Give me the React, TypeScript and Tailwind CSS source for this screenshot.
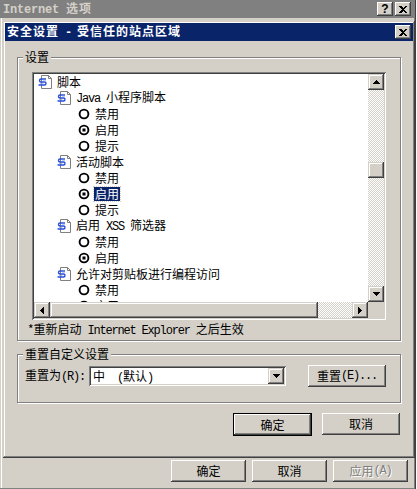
import React from 'react';

const cjk = "font-['Noto_Sans_CJK_SC','Noto_Sans',sans-serif]";

function M({ children, bold }: { children: React.ReactNode; bold?: boolean }) {
  return (
    <span
      className={
        bold
          ? "font-['Liberation_Mono',monospace] text-[12px] tracking-[-0.2px] whitespace-pre"
          : "font-['Liberation_Mono',monospace] text-[12px] tracking-[-1.2px] whitespace-pre"
      }
    >
      {children}
    </span>
  );
}

function Tri({ dir }: { dir: 'up' | 'down' | 'left' | 'right' }) {
  if (dir === 'up' || dir === 'down') {
    return (
      <svg width="7" height="4" viewBox="0 0 7 4" shapeRendering="crispEdges">
        <polygon points={dir === 'up' ? '3.5,0 7,4 0,4' : '0,0 7,0 3.5,4'} fill="#000" />
      </svg>
    );
  }
  return (
    <svg width="4" height="7" viewBox="0 0 4 7" shapeRendering="crispEdges">
      <polygon points={dir === 'left' ? '4,0 4,7 0,3.5' : '0,0 0,7 4,3.5'} fill="#000" />
    </svg>
  );
}

function ArrowBtn({ dir }: { dir: 'up' | 'down' | 'left' | 'right' }) {
  return (
    <div className="w-[16px] h-[16px] shrink-0 bg-[#d4d0c8] flex items-center justify-center shadow-[inset_-1px_-1px_0_#404040,inset_1px_1px_0_#d4d0c8,inset_-2px_-2px_0_#808080,inset_2px_2px_0_#ffffff]">
      <Tri dir={dir} />
    </div>
  );
}

function CloseGlyph() {
  return (
    <svg width="8" height="7" viewBox="0 0 8 7" shapeRendering="crispEdges">
      <path d="M0 0h2l2 2l2 -2h2l-3 3.5l3 3.5h-2l-2 -2l-2 2h-2l3 -3.5z" fill="#000" />
    </svg>
  );
}

function TitleBtn({ children }: { children: React.ReactNode }) {
  return (
    <div className="w-[16px] h-[14px] bg-[#d4d0c8] flex items-center justify-center shadow-[inset_-1px_-1px_0_#404040,inset_1px_1px_0_#ffffff,inset_-2px_-2px_0_#808080]">
      {children}
    </div>
  );
}

function ScriptIcon() {
  return (
    <svg width="16" height="16" viewBox="0 0 16 16" className="shrink-0">
      <path d="M4.5 1.5h7l3 3v10h-10z" fill="#fff" stroke="#808080" />
      <path d="M11.5 1.5v3h3" fill="none" stroke="#808080" />
      <path d="M9 5H4a1.5 1.5 0 0 0 0 3h3.5a1.5 1.5 0 0 1 0 3H1.5" fill="none" stroke="#2a4fd6" strokeWidth="1.4" />
      <path d="M6 6.3h3M3 9.5h3.5" stroke="#9db4f0" strokeWidth="0.8" />
    </svg>
  );
}

function Radio({ checked }: { checked?: boolean }) {
  return (
    <svg width="12" height="12" viewBox="0 0 12 12" className="shrink-0">
      <circle cx="6" cy="6" r="4.4" fill="#fff" stroke="#000" strokeWidth="1.9" />
      {checked && <rect x="4.5" y="4.5" width="3" height="3" fill="#000" />}
    </svg>
  );
}

type Row =
  | { kind: 'head'; level: 0 | 1; text: React.ReactNode }
  | { kind: 'radio'; text: string; checked?: boolean; selected?: boolean };

const rows: Row[] = [
  { kind: 'head', level: 0, text: '脚本' },
  { kind: 'head', level: 1, text: <><M>Java </M>小程序脚本</> },
  { kind: 'radio', text: '禁用' },
  { kind: 'radio', text: '启用', checked: true },
  { kind: 'radio', text: '提示' },
  { kind: 'head', level: 1, text: '活动脚本' },
  { kind: 'radio', text: '禁用' },
  { kind: 'radio', text: '启用', checked: true, selected: true },
  { kind: 'radio', text: '提示' },
  { kind: 'head', level: 1, text: <>启用<M> XSS </M>筛选器</> },
  { kind: 'radio', text: '禁用' },
  { kind: 'radio', text: '启用', checked: true },
  { kind: 'head', level: 1, text: '允许对剪贴板进行编程访问' },
  { kind: 'radio', text: '禁用' },
  { kind: 'radio', text: '启用', checked: true },
];

function TreeRow({ row }: { row: Row }) {
  if (row.kind === 'head') {
    return (
      <div className={`h-[16px] flex items-center gap-[4px] whitespace-nowrap ${row.level === 0 ? 'pl-[3px]' : 'pl-[22px]'}`}>
        <ScriptIcon />
        <span className="leading-[16px]">{row.text}</span>
      </div>
    );
  }
  return (
    <div className="h-[16px] flex items-center pl-[44px] whitespace-nowrap">
      <Radio checked={row.checked} />
      <span
        className={
          row.selected
            ? 'ml-[4px] px-[1px] leading-[14px] bg-[#0a246a] text-white outline outline-1 outline-dotted outline-[#d4d0c8]'
            : 'ml-[5px] leading-[16px]'
        }
      >
        {row.text}
      </span>
    </div>
  );
}

function Group({ label, className, children }: { label: string; className?: string; children: React.ReactNode }) {
  return (
    <div className={`relative mx-[12px] border border-[#808080] shadow-[inset_1px_1px_0_#ffffff,1px_1px_0_#ffffff] ${className ?? ''}`}>
      <span className="absolute -top-[8px] left-[5px] px-[2px] bg-[#d4d0c8] leading-[14px]">{label}</span>
      {children}
    </div>
  );
}

function Btn({ children, w, def, disabled }: { children: React.ReactNode; w: string; def?: boolean; disabled?: boolean }) {
  if (def) {
    return (
      <div className={`${w} h-[23px] border border-black`}>
        <div className="w-full h-full flex items-center justify-center shadow-[inset_-1px_-1px_0_#404040,inset_1px_1px_0_#ffffff,inset_-2px_-2px_0_#808080]">
          {children}
        </div>
      </div>
    );
  }
  return (
    <div
      className={`${w} h-[22px] flex items-center justify-center shadow-[inset_-1px_-1px_0_#404040,inset_1px_1px_0_#ffffff,inset_-2px_-2px_0_#808080] ${
        disabled ? 'text-[#808080] [text-shadow:1px_1px_0_#ffffff]' : ''
      }`}
    >
      {children}
    </div>
  );
}

export default function App() {
  return (
    <div className={`relative w-[417px] h-[489px] overflow-hidden bg-[#d4d0c8] text-[12px] text-black ${cjk} flex flex-col shadow-[inset_-1px_0_0_#ffffff,inset_-2px_0_0_#404040,inset_-3px_0_0_#808080,inset_0_-1px_0_#808080,inset_1px_0_0_#d4d0c8,inset_2px_0_0_#ffffff]`}>
      {/* outer window: Internet 选项 (inactive) */}
      <div className="h-[18px] mr-[2px] bg-[#808080] flex items-center justify-between pl-[3px] pr-[4px] text-[#d4d0c8] font-bold">
        <span className="leading-[18px] tracking-[1px]">
          <M bold>Internet </M>选项
        </span>
        <div className="flex gap-[2px]">
          <TitleBtn>
            <span className="text-black font-bold text-[12px] leading-[12px] font-['Liberation_Sans',sans-serif]">?</span>
          </TitleBtn>
          <TitleBtn>
            <CloseGlyph />
          </TitleBtn>
        </div>
      </div>

      <div className="mt-auto mb-[7px] flex justify-end gap-[6px] pr-[9px]">
        <Btn w="w-[75px]">确定</Btn>
        <Btn w="w-[75px]">取消</Btn>
        <Btn w="w-[75px]" disabled>
          应用<M>(A)</M>
        </Btn>
      </div>

      {/* dialog: 安全设置 */}
      <div className="absolute left-[3px] top-[21px] w-[412px] h-[437px] bg-[#d4d0c8] p-[2px] flex flex-col shadow-[inset_-1px_-1px_0_#404040,inset_1px_1px_0_#d4d0c8,inset_-2px_-2px_0_#808080,inset_2px_2px_0_#ffffff]">
        <div className="h-[18px] shrink-0 bg-[#0a246a] flex items-center justify-between pl-[2px] pr-[2px]">
          <span className="text-white font-bold leading-[18px] tracking-[1px]">
            安全设置<M> - </M>受信任的站点区域
          </span>
          <TitleBtn>
            <CloseGlyph />
          </TitleBtn>
        </div>

        <Group label="设置" className="mt-[16px] pl-[14px] pt-[14px] pb-[4px]">
          <div className="w-[354px] h-[248px] bg-white p-[2px] flex flex-col shadow-[inset_1px_1px_0_#808080,inset_-1px_-1px_0_#ffffff,inset_2px_2px_0_#404040,inset_-2px_-2px_0_#d4d0c8]">
            <div className="flex flex-1 min-h-0">
              <div className="flex-1 overflow-hidden">
                {rows.map((r, i) => (
                  <TreeRow key={i} row={r} />
                ))}
              </div>
              <div className="w-[16px] flex flex-col">
                <ArrowBtn dir="up" />
                <div className="flex-1 flex flex-col bg-[repeating-conic-gradient(#d4d0c8_0_25%,#ffffff_0_50%)] bg-[length:2px_2px]">
                  <div className="mt-[72px] h-[16px] bg-[#d4d0c8] shadow-[inset_-1px_-1px_0_#404040,inset_1px_1px_0_#d4d0c8,inset_-2px_-2px_0_#808080,inset_2px_2px_0_#ffffff]" />
                </div>
                <ArrowBtn dir="down" />
              </div>
            </div>
            <div className="h-[16px] flex">
              <ArrowBtn dir="left" />
              <div className="w-[268px] h-[16px] bg-[#d4d0c8] shadow-[inset_-1px_-1px_0_#404040,inset_1px_1px_0_#d4d0c8,inset_-2px_-2px_0_#808080,inset_2px_2px_0_#ffffff]" />
              <div className="flex-1 bg-[repeating-conic-gradient(#d4d0c8_0_25%,#ffffff_0_50%)] bg-[length:2px_2px]" />
              <ArrowBtn dir="right" />
              <div className="w-[16px] bg-[#d4d0c8]" />
            </div>
          </div>
          <div className="mt-[2px] -ml-[4px] h-[14px] leading-[14px] whitespace-nowrap">
            *重新启动<M> Internet Explorer </M>之后生效
          </div>
        </Group>

        <Group label="重置自定义设置" className="mt-[13px] pl-[7px] pt-[10px] pb-[15px]">
          <div className="h-[22px] flex items-center">
            <span className="w-[64px] whitespace-nowrap">
              重置为<M>(R):</M>
            </span>
            <div className="w-[197px] h-[20px] bg-white p-[2px] flex shadow-[inset_1px_1px_0_#808080,inset_-1px_-1px_0_#ffffff,inset_2px_2px_0_#404040,inset_-2px_-2px_0_#d4d0c8]">
              <span className="flex-1 pl-[2px] leading-[16px] whitespace-pre">
                中<M>  (</M>默认<M>)</M>
              </span>
              <ArrowBtn dir="down" />
            </div>
            <div className="ml-[22px]">
              <Btn w="w-[78px]">
                重置<M>(E)...</M>
              </Btn>
            </div>
          </div>
        </Group>

        <div className="mt-[10px] flex justify-end items-start gap-[10px] pr-[13px]">
          <Btn w="w-[79px]" def>
            确定
          </Btn>
          <Btn w="w-[78px]">取消</Btn>
        </div>
      </div>
    </div>
  );
}
